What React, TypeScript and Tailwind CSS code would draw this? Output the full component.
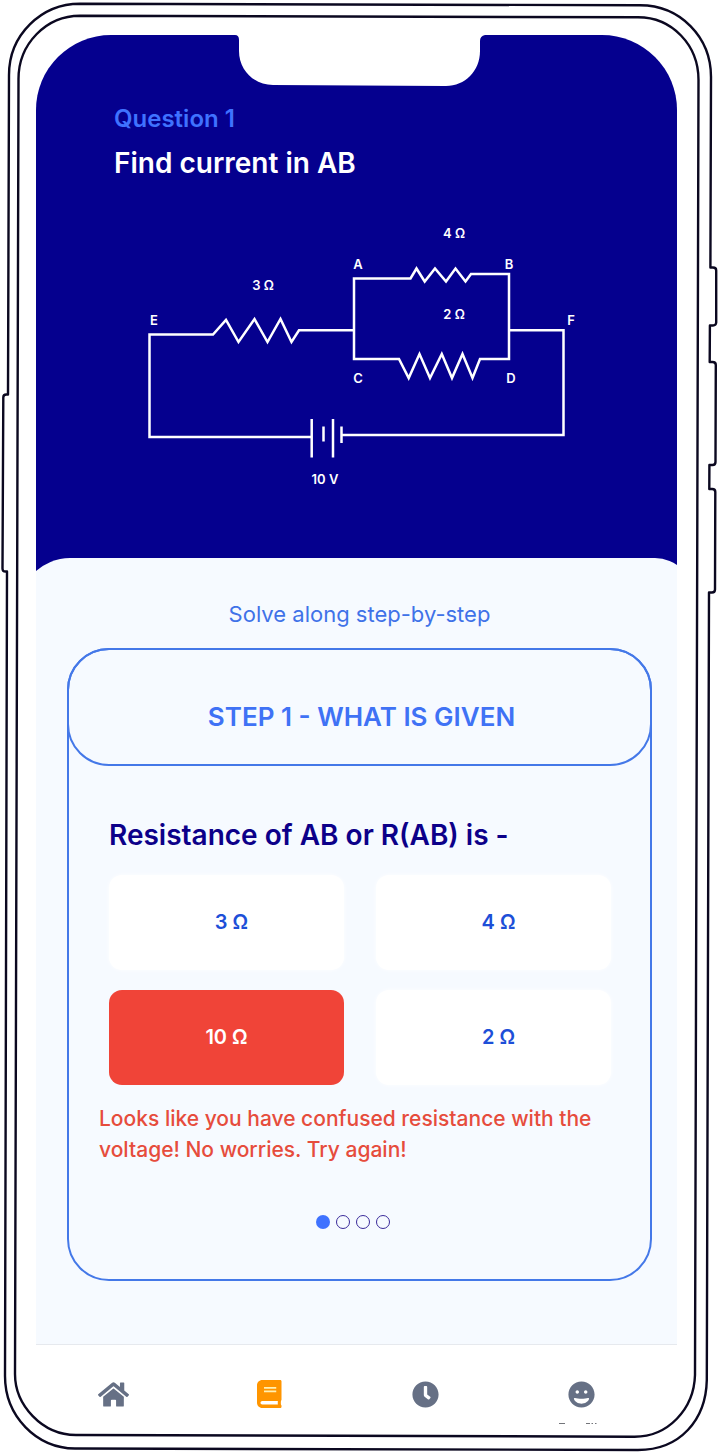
import { useState, type ReactNode } from "react";
import { FaClock, FaGrin, FaHome } from "react-icons/fa";

function DeviceFrame() {
  return (
    <svg
      className="pointer-events-none absolute inset-0 h-full w-full"
      viewBox="0 0 718 1456"
      preserveAspectRatio="none"
      fill="none"
      stroke="#0b0820"
      strokeWidth="2.4"
      strokeLinejoin="round"
      aria-hidden="true"
    >
      <path d="M80 3.7 L640 5.3 C680 5.3 711 37 711 77 L710.4 267.5 H713 Q716.2 267.5 716.2 270.5 V322.5 Q716 325.5 713 325.5 H709.9 L709.7 362 H712.5 Q715.8 362 715.8 365 L715.5 462 Q715.5 465 712.5 465 H709.4 L709.3 489 H712.2 Q715.3 489 715.3 492 L715 589.5 Q715 592.5 712 592.5 H709 L706.8 1380 C706 1420 680 1450 638 1450 L75 1448.5 C36 1448 5 1416 5 1376 L7 571.5 H5.5 Q2.5 571.5 2.5 568.5 L3.3 397.5 Q3.3 394.5 6.3 394.5 H8 L9 75 C9 35 41 3.7 80 3.7 Z" />
      <path d="M80 15.7 L638 17.3 C672 17.3 698.5 45 698.5 80 L695 1375 C694 1409 668 1437 634 1436.7 L76 1435 C42 1435 15 1405 15 1374 L18.5 79 C18.5 44 46 15.7 80 15.7 Z" />
    </svg>
  );
}

function Notch() {
  return (
    <div className="absolute inset-x-0 top-0 flex justify-center pl-[6px]">
      <svg
        className="h-[52px] w-[250px]"
        viewBox="0 0 250 52"
        fill="#ffffff"
        aria-hidden="true"
      >
        <path d="M0 0 H250 Q245 1 245 6 V16 C245 36 230 51 211 51 L38 50 C19 50 4 35 4 16 V5 Q4 0 0 0 Z" />
      </svg>
    </div>
  );
}

const circuitLabels = [
  { text: "4 Ω", x: 324, y: 23 },
  { text: "A", x: 228, y: 54 },
  { text: "B", x: 379, y: 54 },
  { text: "3 Ω", x: 133, y: 75 },
  { text: "2 Ω", x: 324, y: 104 },
  { text: "E", x: 24, y: 110 },
  { text: "F", x: 441, y: 110 },
  { text: "C", x: 228, y: 168 },
  { text: "D", x: 381, y: 168 },
  { text: "10 V", x: 195, y: 269 },
];

function Circuit() {
  return (
    <svg
      className="block w-[460px] max-w-full"
      viewBox="0 0 460 280"
      role="img"
      aria-label="Circuit with a 3 Ω resistor in series with 4 Ω and 2 Ω in parallel, and a 10 V battery"
    >
      <g fill="none" stroke="#ffffff" strokeWidth="2.5">
        <path d="M181 222 H19.5 V119.5 H83 L96 105 L108.500 127 L124.500 104 L137.500 127 L150.500 104 L161.500 127 L169 115.300 H224" />
        <path d="M379 144 V59 H341 L335.5 66.5 L325.5 53.5 L316 66.5 L305 53.5 L294.7 66.5 L286.5 53.5 L280.5 63.5 H224 V144 H269 L278.7 163 L289.5 139 L300 163 L311.8 139 L322 163 L332.5 139 L342.5 163 L350 144 Z" />
        <path d="M379 115.3 H433.5 V220 H212" />
        <path d="M181.7 204 V242.5 M193.5 211.5 V226.5 M203 204 V242.5 M211.5 211.5 V228" />
      </g>
      <g
        className="font-['Inter',sans-serif] text-[13px] font-semibold"
        fill="#ffffff"
        textAnchor="middle"
      >
        {circuitLabels.map((label) => (
          <text key={label.text} x={label.x} y={label.y}>
            {label.text}
          </text>
        ))}
      </g>
    </svg>
  );
}

function BookIcon() {
  return (
    <svg viewBox="0 0 448 512" className="h-[28px]" aria-hidden="true">
      <rect x="110" y="115" width="260" height="120" fill="#fff0b3" />
      <path
        fill="#ff9500"
        d="M448 360V24c0-13.3-10.7-24-24-24H96C43 0 0 43 0 96v320c0 53 43 96 96 96h328c13.3 0 24-10.7 24-24v-16c0-7.5-3.5-14.3-8.9-18.7-4.2-15.4-4.2-59.3 0-74.7 5.4-4.3 8.9-11.1 8.9-18.6zM128 134c0-3.3 2.7-6 6-6h212c3.3 0 6 2.7 6 6v20c0 3.3-2.7 6-6 6H134c-3.3 0-6-2.7-6-6v-20zm0 64c0-3.3 2.7-6 6-6h212c3.3 0 6 2.7 6 6v20c0 3.3-2.7 6-6 6H134c-3.3 0-6-2.7-6-6v-20zm253.4 250H96c-17.7 0-32-14.3-32-32 0-17.6 14.4-32 32-32h285.4c-1.9 17.1-1.9 46.9 0 64z"
      />
    </svg>
  );
}

function NavButton({ label, children }: { label: string; children: ReactNode }) {
  return (
    <button
      type="button"
      aria-label={label}
      className="flex h-[30px] items-center justify-center text-[#667085]"
    >
      {children}
    </button>
  );
}

const options = ["3 Ω", "4 Ω", "10 Ω", "2 Ω"];

export default function App() {
  const [selected, setSelected] = useState("10 Ω");

  return (
    <main className="relative mx-auto w-full max-w-[718px] bg-white pt-[35px] pr-[41px] pl-[36px] font-['Inter',sans-serif]">
      <DeviceFrame />
      <div className="relative overflow-hidden rounded-t-[75px] bg-[#05008e]">
        <Notch />
        <header className="h-[523px] pt-[68px] pl-[78px] font-semibold">
          <p className="text-[24px] leading-[32px] text-[#3f72ff]">Question 1</p>
          <h1 className="mt-[10px] text-[28px] leading-[36px] text-white">
            Find current in AB
          </h1>
          <div className="mt-[34px] ml-[16px]">
            <Circuit />
          </div>
        </header>

        <section className="-mr-[16px] -ml-[17px] rounded-tl-[51px] rounded-tr-[38px] bg-[#f6faff] pt-[40px] pr-[41px] pb-[63px] pl-[48px]">
          <p className="text-center text-[22px] leading-[32px] text-[#3f72e8]">
            Solve along step-by-step
          </p>
          <div className="mt-[18px] rounded-[42px] border-2 border-[#4478e8] pb-[50px]">
            <h2 className="-mx-[2px] -mt-[2px] flex h-[118px] items-center justify-center rounded-[42px] border-2 border-[#4478e8] pt-[18px] pl-[4px] text-[26px] font-semibold text-[#3f72f5]">
              STEP 1 - WHAT IS GIVEN
            </h2>
            <div className="pr-[39px] pl-[40px]">
              <h3 className="pt-[49px] text-[28px] leading-[40px] font-semibold text-[#0c0089]">
                Resistance of AB or R(AB) is -
              </h3>
              <div className="mt-[20px] grid grid-cols-2 gap-x-[32px] gap-y-[20px]">
                {options.map((option) => (
                  <button
                    key={option}
                    type="button"
                    aria-pressed={selected === option}
                    onClick={() => setSelected(option)}
                    className={
                      selected === option
                        ? "h-[95px] rounded-[13px] bg-[#f04438] pb-[2px] text-[20px] font-semibold text-white"
                        : "h-[95px] rounded-[13px] bg-white pb-[2px] pl-[10px] text-[20px] font-semibold text-[#1d4fd8] shadow-[0_0_4px_rgba(255,255,255,0.9)]"
                    }
                  >
                    {option}
                  </button>
                ))}
              </div>
            </div>
            <p className="mt-[18px] pr-[20px] pl-[30px] text-[21px] leading-[31px] font-medium text-[#e64c3c]">
              Looks like you have confused resistance with the voltage! No
              worries. Try again!
            </p>
            <div className="mt-[50px] flex justify-center gap-[6px] pr-[14px]">
              <span className="size-[14px] rounded-full bg-[#3f72ff]" />
              <span className="size-[14px] rounded-full border border-[#3a2a9a]" />
              <span className="size-[14px] rounded-full border border-[#3a2a9a]" />
              <span className="size-[14px] rounded-full border border-[#3a2a9a]" />
            </div>
          </div>
        </section>
      </div>

      <nav className="relative border-t border-[#e6e9ee] pt-[34px] pb-[47px]">
        <div className="grid grid-cols-4 pr-[18px]">
          <NavButton label="Home">
            <FaHome className="size-[31px]" />
          </NavButton>
          <NavButton label="Lessons">
            <BookIcon />
          </NavButton>
          <NavButton label="History">
            <FaClock className="size-[27px]" />
          </NavButton>
          <NavButton label="Profile">
            <FaGrin className="size-[27px]" />
          </NavButton>
        </div>
        <svg
          className="absolute right-[79px] bottom-[31px] h-[2px] w-[40px]"
          viewBox="0 0 40 2"
          stroke="#73757a"
          strokeWidth="1"
          aria-hidden="true"
        >
          <path d="M1 .5 H7 M28 .5 H32 M33.5 .5 H35 M37 .5 H38.5" />
        </svg>
      </nav>
    </main>
  );
}
